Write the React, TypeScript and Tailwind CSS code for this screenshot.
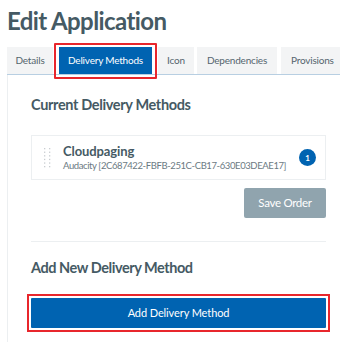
import React from "react";

const font = { fontFamily: "Lato, 'Noto Sans', sans-serif" };

function Dots() {
  return (
    <svg width="8" height="20" viewBox="0 0 8 20" className="shrink-0">
      {[0, 1, 2, 3, 4, 5].map((r) =>
        [0, 1].map((c) => (
          <rect key={`${r}-${c}`} x={c * 5} y={r * 3.6} width="1.3" height="1.3" fill="#c9cdd1" />
        ))
      )}
    </svg>
  );
}

export default function App() {
  return (
    <div className="w-[340px] h-[348px] bg-white overflow-hidden text-[#37474f]" style={font}>
      <h1 className="pl-[7px] pt-[6px] text-[24px] tracking-[-0.6px] font-bold leading-[30px] text-[#455a64]">Edit Application</h1>
      <div className="ml-[7px] mt-[11px] flex items-end border-b border-[#b8cfe2] h-[28px] whitespace-nowrap text-[10px] tracking-[-0.2px]">
        <div className="shrink-0 h-[27px] w-[46px] bg-[#f3f4f5] flex items-center justify-center text-[#55656e]">Details</div>
        <div className="shrink-0 ml-[6px] relative h-[27px] w-[93px] bg-[#0063b1] flex items-center justify-center text-white">
          Delivery Methods
          <div className="absolute -left-[5px] -top-[4px] -right-[5px] -bottom-[5px] border-2 border-[#e8262c] rounded-[1px]" />
        </div>
        <div className="shrink-0 ml-[6px] h-[27px] w-[36px] bg-[#f3f4f5] flex items-center justify-center text-[#55656e]">Icon</div>
        <div className="shrink-0 ml-[3px] h-[27px] w-[80px] bg-[#f3f4f5] flex items-center justify-center text-[#55656e]">Dependencies</div>
        <div className="shrink-0 ml-[4px] h-[27px] w-[70px] bg-[#f3f4f5] flex items-center pl-[10px] text-[#55656e]">Provisions</div>
      </div>
      <div className="ml-[7px] border-l border-[#eceff1] h-[267px] pl-[23px] pr-[14px]">
        <h2 className="pt-[20px] text-[14.5px] tracking-[-0.35px] font-bold leading-[20px] text-[#455a64]">Current Delivery Methods</h2>
        <div className="mt-[20px] h-[45px] border border-[#eceff1] flex items-center pl-[12px] pr-[9px]">
          <Dots />
          <div className="ml-[11px] flex-1 min-w-0">
            <div className="text-[13px] tracking-[-0.1px] font-bold leading-[16px] text-[#455a64]">Cloudpaging</div>
            <div className="text-[9.5px] tracking-[-0.4px] leading-[14px] text-[#6b7a83] whitespace-nowrap">Audacity [2C687422-FBFB-251C-CB17-630E03DEAE17]</div>
          </div>
          <div className="w-[17px] h-[17px] rounded-full bg-[#0063b1] text-white text-[8px] font-bold flex items-center justify-center shrink-0">1</div>
        </div>
        <div className="flex justify-end mt-[8px]">
          <div className="w-[82px] h-[30px] bg-[#90a4ae] rounded-[2px] text-white text-[11.5px] tracking-[-0.3px] flex items-center justify-center">Save Order</div>
        </div>
        <div className="mt-[23px] border-t border-[#eceff1]" />
        <h2 className="mt-[16px] text-[14.5px] tracking-[-0.45px] font-bold leading-[20px] text-[#455a64]">Add New Delivery Method</h2>
        <div className="relative mt-[20px] h-[30px] bg-[#0063b1] rounded-[1px] text-white text-[11px] tracking-[-0.1px] flex items-center justify-center">
          Add Delivery Method
          <div className="absolute -left-[4px] -top-[4px] -right-[4px] -bottom-[4px] border-2 border-[#e8262c]" />
        </div>
      </div>
    </div>
  );
}
